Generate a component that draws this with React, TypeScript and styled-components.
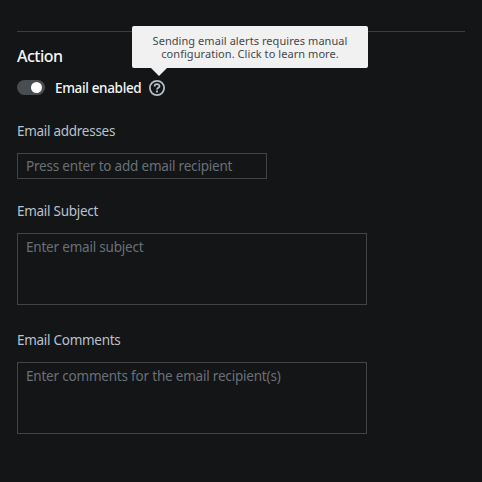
import React from "react";
import styled, { createGlobalStyle, css } from "styled-components";

const GlobalStyle = createGlobalStyle`
  * { box-sizing: border-box; }
  body {
    margin: 0;
    background: #141517;
    font-family: "Noto Sans", "Open Sans", sans-serif;
  }
`;

const Page = styled.main`
  height: 482px;
  padding: 31px 17px 0;
  overflow: hidden;
  background: #141517;
`;

const Divider = styled.hr`
  height: 1px;
  margin: 0;
  border: 0;
  background: #3d3d3f;
`;

const Heading = styled.h2`
  margin: 12px 0 0;
  color: #f5f5f5;
  font-size: 16px;
  font-weight: 500;
  line-height: 24px;
  letter-spacing: -0.5px;
`;

const ToggleRow = styled.div`
  display: flex;
  align-items: center;
  height: 22px;
  margin-top: 9px;
`;

const Switch = styled.button`
  display: flex;
  justify-content: flex-end;
  align-items: center;
  width: 28px;
  height: 15px;
  margin: 0 10px 1px 0;
  padding: 0 3px 0 0;
  border: 0;
  border-radius: 8px;
  background: #484d51;
`;

const Knob = styled.span`
  width: 11px;
  height: 11px;
  border-radius: 50%;
  background: #fff;
`;

const ToggleLabel = styled.span`
  width: 87px;
  color: #f5f5f5;
  font-size: 13.5px;
  font-weight: 500;
  line-height: 22px;
  letter-spacing: -0.35px;
  white-space: nowrap;
`;

const HelpAnchor = styled.span`
  position: relative;
  display: flex;
  width: 16px;
  height: 16px;
  margin-left: 7px;
`;

const Tooltip = styled.div`
  position: absolute;
  bottom: 28px;
  left: -17px;
  width: 236px;
  height: 42px;
  padding: 8px 10px 0;
  border-radius: 2px;
  background: #f1f1f1;
  color: #46484b;
  font-size: 11px;
  line-height: 13px;
  text-align: center;
  letter-spacing: 0.06px;

  &::after {
    content: "";
    position: absolute;
    top: 42px;
    left: 19px;
    border: solid transparent;
    border-width: 8px 8px 0;
    border-top-color: #f1f1f1;
  }
`;

const Field = styled.div<{ $gap: number }>`
  margin-top: ${(p) => p.$gap}px;
`;

const Label = styled.label`
  display: block;
  margin-bottom: 11px;
  color: #b9c1cd;
  font-size: 13.5px;
  line-height: 22px;
  letter-spacing: -0.28px;
`;

const control = css`
  display: block;
  margin: 0;
  border: 1px solid #434446;
  border-radius: 0;
  outline: 0;
  background: transparent;
  font: 13.5px/18px "Noto Sans", "Open Sans", sans-serif;
  letter-spacing: -0.2px;

  &::placeholder {
    color: #697077;
    opacity: 1;
  }
`;

const TextInput = styled.input`
  ${control}
  width: 250px;
  height: 26px;
  padding: 0 8px;
`;

const TextArea = styled.textarea`
  ${control}
  width: 350px;
  height: 72px;
  padding: 4px 8px;
  resize: none;
`;

const HelpIcon = () => (
  <svg width="16" height="16" viewBox="0 0 16 16" fill="none" stroke="#b5bdc5">
    <circle cx="8" cy="8" r="7.1" strokeWidth="1.8" />
    <path d="M5.6 6.4C5.6 3.4 10.5 3.5 10.5 6.2C10.5 7.8 8 7.8 8 9.6" strokeWidth="1.8" />
    <path d="M8 10.6V12.4" strokeWidth="1.9" />
  </svg>
);

export default function App() {
  return (
    <>
      <GlobalStyle />
      <Page>
        <Divider />
        <Heading>Action</Heading>
        <ToggleRow>
          <Switch role="switch" aria-checked="true" aria-label="Email enabled">
            <Knob />
          </Switch>
          <ToggleLabel>Email enabled</ToggleLabel>
          <HelpAnchor>
            <HelpIcon />
            <Tooltip role="tooltip">
              Sending email alerts requires manual
              <br />
              configuration. Click to learn more.
            </Tooltip>
          </HelpAnchor>
        </ToggleRow>
        <Field $gap={21}>
          <Label htmlFor="addresses">Email addresses</Label>
          <TextInput id="addresses" placeholder="Press enter to add email recipient" />
        </Field>
        <Field $gap={21}>
          <Label htmlFor="subject">Email Subject</Label>
          <TextArea id="subject" placeholder="Enter email subject" />
        </Field>
        <Field $gap={24}>
          <Label htmlFor="comments">Email Comments</Label>
          <TextArea id="comments" placeholder="Enter comments for the email recipient(s)" />
        </Field>
      </Page>
    </>
  );
}
